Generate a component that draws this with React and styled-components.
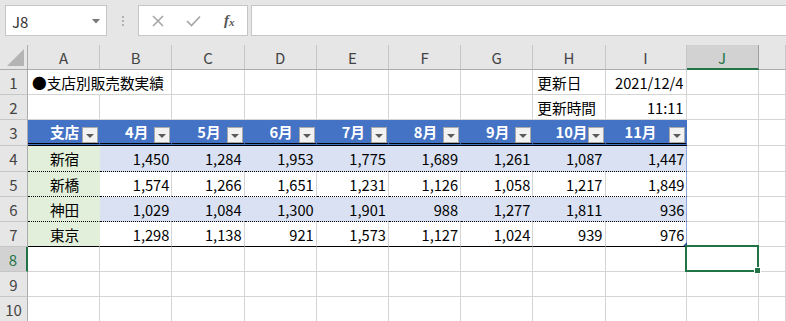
import React from "react";
import styled, { createGlobalStyle, css } from "styled-components";

const FONT = `"Noto Sans CJK JP", "Noto Sans", sans-serif`;
const GRID = "#d4d4d4";
const GREEN = "#217346";
const BLUE_HEAD = "#4472c4";
const BLUE_ROW = "#d9e1f2";
const GREEN_ROW = "#e2efda";

const GlobalStyle = createGlobalStyle`
  html, body { margin: 0; padding: 0; background: #fff; }
  body { font-family: ${FONT}; }
`;

const Window = styled.div`
  width: 786px;
  height: 321px;
  overflow: hidden;
  background: #fff;
  display: flex;
  flex-direction: column;
`;

const FormulaBar = styled.div`
  height: 45px;
  flex: none;
  box-sizing: border-box;
  background: #e6e6e6;
  display: flex;
  align-items: flex-start;
  padding: 5px 0 0 5px;
`;

const NameBox = styled.div`
  width: 102px;
  height: 31px;
  box-sizing: border-box;
  border: 1px solid #c6c6c6;
  background: #fff;
  display: flex;
  align-items: center;
  justify-content: space-between;
  padding: 1px 6px 0 6px;
  font: 15px ${FONT};
  color: #333;
`;

const Grip = styled.div`
  width: 31px;
  height: 31px;
  display: flex;
  flex-direction: column;
  align-items: center;
  justify-content: center;
  gap: 2px;
  & > i {
    width: 2px;
    height: 2px;
    background: #b0b0b0;
  }
`;

const FxBox = styled.div`
  width: 110px;
  height: 31px;
  box-sizing: border-box;
  border: 1px solid #c6c6c6;
  background: #fff;
  display: flex;
  align-items: center;
  padding-left: 1px;
`;

const FxSlot = styled.div`
  width: 36px;
  height: 100%;
  display: flex;
  align-items: center;
  justify-content: center;
`;

const FxText = styled.span`
  font-family: "Liberation Serif", "DejaVu Serif", serif;
  font-style: italic;
  font-weight: bold;
  font-size: 15px;
  color: #555;
  & > sub {
    font-size: 11px;
    vertical-align: -1px;
  }
`;

const FormulaInput = styled.div`
  flex: 1;
  height: 31px;
  margin-left: 3px;
  box-sizing: border-box;
  border: 1px solid #c6c6c6;
  border-right: none;
  background: #fff;
`;

const Sheet = styled.div`
  flex: none;
  display: grid;
  grid-template-columns: 28px repeat(8, 72.2px) 81px 72.2px 1fr;
  grid-template-rows: 25px 25px 25px 26px 26px 25px 25px 25px 25px 25px 25px;
  font: 14.67px ${FONT};
  color: #000;
  background: #fff;
`;

const Corner = styled.div`
  position: relative;
  background: #e6e6e6;
  border-right: 1px solid #ababab;
  border-bottom: 1px solid #ababab;
  box-sizing: border-box;
  &::after {
    content: "";
    position: absolute;
    right: 3px;
    bottom: 3px;
    width: 0;
    height: 0;
    border-left: 17px solid transparent;
    border-bottom: 17px solid #b4b4b4;
  }
`;

const ColHead = styled.div`
  box-sizing: border-box;
  background: ${(p) => (p.$active ? "#d2d2d2" : "#e6e6e6")};
  color: ${(p) => (p.$active ? GREEN : "#444")};
  border-right: 1px solid ${(p) => (p.$active ? "#9f9f9f" : "#c6c6c6")};
  border-bottom: ${(p) => (p.$active ? `2px solid ${GREEN}` : "1px solid #ababab")};
  display: flex;
  align-items: center;
  justify-content: center;
  font-size: 15px;
  padding-top: 1px;
`;

const RowHead = styled.div`
  box-sizing: border-box;
  background: ${(p) => (p.$active ? "#d2d2d2" : "#e6e6e6")};
  color: ${(p) => (p.$active ? GREEN : "#444")};
  border-right: ${(p) => (p.$active ? `2px solid ${GREEN}` : "1px solid #ababab")};
  border-bottom: 1px solid #c6c6c6;
  display: flex;
  align-items: center;
  justify-content: center;
  font-size: 15px;
`;

const justify = { left: "flex-start", center: "center", right: "flex-end" };

const Cell = styled.div`
  position: relative;
  box-sizing: border-box;
  min-width: 0;
  display: flex;
  align-items: center;
  justify-content: ${(p) => justify[p.$align || "left"]};
  padding: 0 ${(p) => (p.$pr != null ? p.$pr : 2)}px 0 4px;
  white-space: nowrap;
  background: ${(p) => p.$fill || "transparent"};
  border-right: 1px solid ${(p) => p.$right || p.$fill || GRID};
  border-bottom: ${(p) => p.$bottom || `1px solid ${GRID}`};
  font-weight: ${(p) => (p.$bold ? 700 : 400)};
  color: ${(p) => p.$color || "#000"};
  ${(p) =>
    p.$hideRight &&
    css`
      border-right-color: transparent;
    `}
`;

const HeadLabel = styled.span`
  padding-right: ${(p) => p.$gap || 0}px;
`;

const FilterButton = styled.span`
  position: absolute;
  right: 1px;
  bottom: 0;
  width: 16px;
  height: 16px;
  box-sizing: border-box;
  background: #f2f2f2;
  border: 1px solid #a9a9a9;
  display: flex;
  align-items: center;
  justify-content: center;
  &::after {
    content: "";
    margin-top: 2px;
    border-left: 4px solid transparent;
    border-right: 4px solid transparent;
    border-top: 4px solid #5a5a5a;
  }
`;

const Selection = styled.span`
  position: absolute;
  z-index: 3;
  left: -2px;
  top: -2px;
  right: -1px;
  bottom: -1px;
  border: 2px solid ${GREEN};
  pointer-events: none;
  &::after {
    content: "";
    position: absolute;
    right: -4px;
    bottom: -4px;
    width: 5px;
    height: 5px;
    background: ${GREEN};
    border: 1px solid #fff;
  }
`;

const ResizeMark = styled.span`
  position: absolute;
  right: -1px;
  bottom: 0;
  width: 0;
  height: 0;
  border-left: 4px solid transparent;
  border-bottom: 4px solid #2f4f9a;
`;

const COLS = ["A", "B", "C", "D", "E", "F", "G", "H", "I", "J", "K"];
const MONTHS = ["4月", "5月", "6月", "7月", "8月", "9月", "10月", "11月"];
const HEAD_GAP = [23, 23, 23, 23, 23, 23, 17, 29];

const DATA = [
  ["新宿", "1,450", "1,284", "1,953", "1,775", "1,689", "1,261", "1,087", "1,447"],
  ["新橋", "1,574", "1,266", "1,651", "1,231", "1,126", "1,058", "1,217", "1,849"],
  ["神田", "1,029", "1,084", "1,300", "1,901", "988", "1,277", "1,811", "936"],
  ["東京", "1,298", "1,138", "921", "1,573", "1,127", "1,024", "939", "976"],
];

function XIcon() {
  return (
    <svg width="12" height="12" viewBox="0 0 12 12">
      <path d="M1 1 L11 11 M11 1 L1 11" stroke="#a6a6a6" strokeWidth="1.6" fill="none" />
    </svg>
  );
}

function CheckIcon() {
  return (
    <svg width="15" height="12" viewBox="0 0 15 12">
      <path d="M1 6 L5.5 10.5 L14 1.5" stroke="#a6a6a6" strokeWidth="1.7" fill="none" />
    </svg>
  );
}

function DropArrow() {
  return (
    <svg width="8" height="5" viewBox="0 0 8 5">
      <path d="M0 0 H8 L4 4.5 Z" fill="#777" />
    </svg>
  );
}

function Toolbar() {
  return (
    <FormulaBar>
      <NameBox>
        <span>J8</span>
        <DropArrow />
      </NameBox>
      <Grip>
        <i />
        <i />
        <i />
      </Grip>
      <FxBox>
        <FxSlot>
          <XIcon />
        </FxSlot>
        <FxSlot>
          <CheckIcon />
        </FxSlot>
        <FxSlot>
          <FxText>
            f<sub>x</sub>
          </FxText>
        </FxSlot>
      </FxBox>
      <FormulaInput />
    </FormulaBar>
  );
}

function EmptyTail({ active }) {
  return (
    <>
      <Cell>{active && <Selection />}</Cell>
      <Cell />
    </>
  );
}

export default function App() {
  const rows = [];

  rows.push(<Corner key="corner" />);
  COLS.forEach((c) =>
    rows.push(
      <ColHead key={"h" + c} $active={c === "J"}>
        {c === "K" ? "" : c}
      </ColHead>
    )
  );

  rows.push(<RowHead key="r1">1</RowHead>);
  rows.push(
    <Cell key="1A" $hideRight>
      ●支店別販売数実績
    </Cell>
  );
  for (let i = 0; i < 6; i++) rows.push(<Cell key={"1x" + i} />);
  rows.push(<Cell key="1H">更新日</Cell>);
  rows.push(
    <Cell key="1I" $align="right">
      2021/12/4
    </Cell>
  );
  rows.push(<Cell key="1J" />, <Cell key="1K" />);

  rows.push(<RowHead key="r2">2</RowHead>);
  for (let i = 0; i < 7; i++) rows.push(<Cell key={"2x" + i} />);
  rows.push(<Cell key="2H">更新時間</Cell>);
  rows.push(
    <Cell key="2I" $align="right">
      11:11
    </Cell>
  );
  rows.push(<Cell key="2J" />, <Cell key="2K" />);

  const headBottom = "3px double #000";
  rows.push(<RowHead key="r3">3</RowHead>);
  rows.push(
    <Cell key="3A" $align="center" $fill={BLUE_HEAD} $bold $color="#fff" $bottom={headBottom}>
      <span>支店</span>
      <FilterButton />
    </Cell>
  );
  MONTHS.forEach((m, i) =>
    rows.push(
      <Cell
        key={"3" + m}
        $align="right"
        $fill={BLUE_HEAD}
        $bold
        $color="#fff"
        $bottom={headBottom}
        $pr={0}
      >
        <HeadLabel $gap={HEAD_GAP[i]}>{m}</HeadLabel>
        <FilterButton />
      </Cell>
    )
  );
  rows.push(<Cell key="3J" />, <Cell key="3K" />);

  DATA.forEach((r, ri) => {
    const n = ri + 4;
    const last = ri === DATA.length - 1;
    const bottom = last ? "1px solid #000" : "1px dotted #000";
    const band = ri % 2 === 0 ? BLUE_ROW : undefined;
    rows.push(<RowHead key={"r" + n}>{n}</RowHead>);
    rows.push(
      <Cell key={n + "A"} $align="center" $fill={GREEN_ROW} $bottom={bottom}>
        {r[0]}
      </Cell>
    );
    r.slice(1).forEach((v, ci) => {
      const isLast = ci === r.length - 2;
      rows.push(
        <Cell
          key={n + "-" + ci}
          $align="right"
          $fill={band}
          $right={isLast ? "#8ea9db" : undefined}
          $bottom={bottom}
          $pr={isLast ? 1 : 2}
        >
          {v}
          {isLast && last && <ResizeMark />}
        </Cell>
      );
    });
    rows.push(<Cell key={n + "J"} />, <Cell key={n + "K"} />);
  });

  [8, 9, 10].forEach((n) => {
    rows.push(
      <RowHead key={"r" + n} $active={n === 8}>
        {n}
      </RowHead>
    );
    for (let i = 0; i < 9; i++) rows.push(<Cell key={n + "e" + i} />);
    rows.push(<EmptyTail key={n + "tail"} active={n === 8} />);
  });

  return (
    <Window>
      <GlobalStyle />
      <Toolbar />
      <Sheet>{rows}</Sheet>
    </Window>
  );
}
